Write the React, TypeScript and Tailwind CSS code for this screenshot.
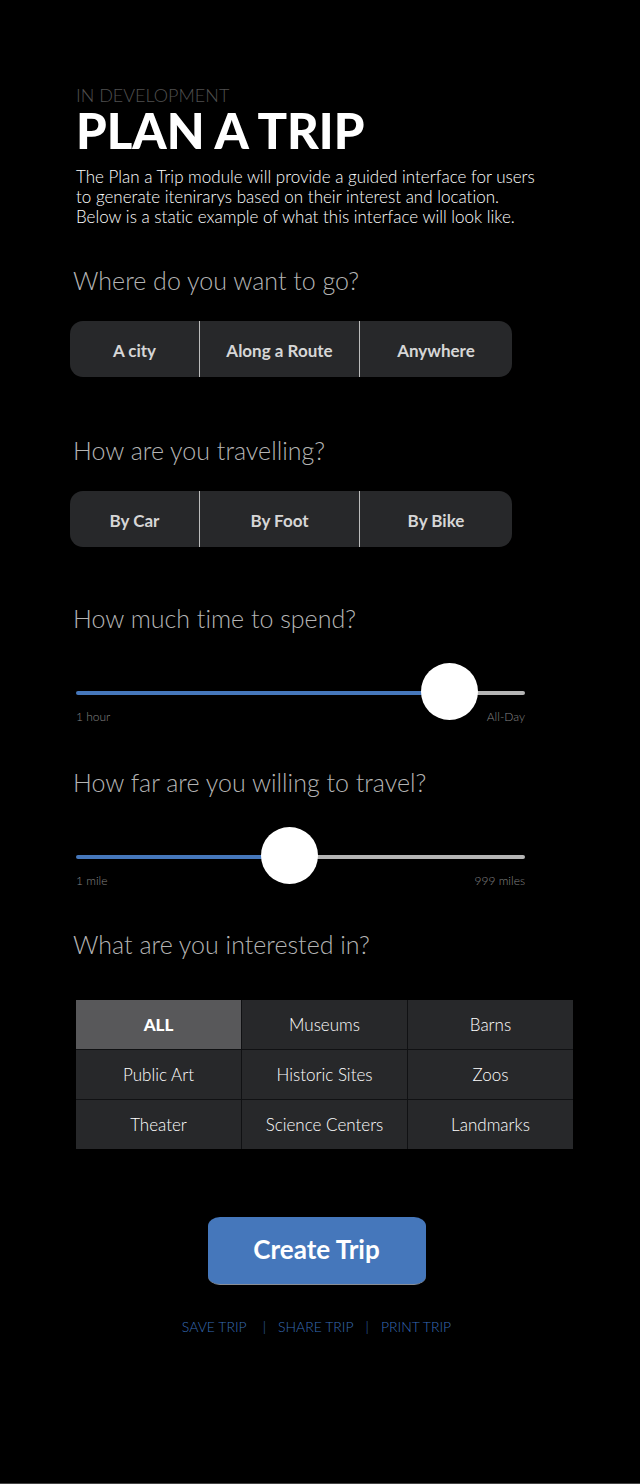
import { useId, useState, type CSSProperties } from "react";

function Heading({ children, id }: { children: string; id?: string }) {
  return (
    <h2 id={id} className="pl-[3px] text-[25px] leading-8 font-light text-[#b4b4b4]">
      {children}
    </h2>
  );
}

function Segmented({ title, options }: { title: string; options: string[] }) {
  const id = useId();
  return (
    <section>
      <Heading id={id}>{title}</Heading>
      <div
        role="group"
        aria-labelledby={id}
        className="mt-[25px] grid h-14 w-full max-w-[442px] grid-cols-[130fr_160fr_152fr] divide-x divide-[#bcbcbc] overflow-hidden rounded-[13px] bg-[#27282a]"
      >
        {options.map((option) => (
          <button key={option} type="button" className="pt-1 text-[17px] leading-5 font-bold text-[#d6d6d6]">
            {option}
          </button>
        ))}
      </div>
    </section>
  );
}

type RangeProps = {
  title: string;
  min: number;
  max: number;
  step: number;
  initial: number;
  minLabel: string;
  maxLabel: string;
};

function Range({ title, min, max, step, initial, minLabel, maxLabel }: RangeProps) {
  const id = useId();
  const [value, setValue] = useState(initial);
  const fill = { "--fill": `${((value - min) / (max - min)) * 100}%` } as CSSProperties;
  return (
    <section>
      <label htmlFor={id}>
        <Heading>{title}</Heading>
      </label>
      <div className="mt-[30px] max-w-[455px] pl-1.5">
        <input
          id={id}
          type="range"
          min={min}
          max={max}
          step={step}
          value={value}
          style={fill}
          onChange={(e) => setValue(Number(e.target.value))}
          className="block h-[57px] w-full cursor-pointer appearance-none bg-transparent [&::-webkit-slider-runnable-track]:h-1 [&::-webkit-slider-runnable-track]:rounded-full [&::-webkit-slider-runnable-track]:bg-[linear-gradient(to_right,#4577bb_var(--fill),#b5b5b5_var(--fill))] [&::-webkit-slider-thumb]:-mt-7 [&::-webkit-slider-thumb]:size-[57px] [&::-webkit-slider-thumb]:appearance-none [&::-webkit-slider-thumb]:rounded-full [&::-webkit-slider-thumb]:bg-white"
        />
        <div className="-mt-3 flex justify-between text-xs leading-4 font-light text-[#858585]">
          <span>{minLabel}</span>
          <span>{maxLabel}</span>
        </div>
      </div>
    </section>
  );
}

const interests = [
  "ALL",
  "Museums",
  "Barns",
  "Public Art",
  "Historic Sites",
  "Zoos",
  "Theater",
  "Science Centers",
  "Landmarks",
];

export default function App() {
  const [selected, setSelected] = useState("ALL");
  return (
    <main className="min-h-screen border-b border-[#444444] bg-black pt-[84px] pr-[67px] pb-16 pl-[70px] font-['Lato',sans-serif] text-white [font-variant-ligatures:none]">
      <header className="pl-1.5">
        <p className="text-lg leading-[22px] font-light text-[#505050]">IN DEVELOPMENT</p>
        <h1 className="text-[49px] leading-12 font-black">PLAN A TRIP</h1>
        <p className="mt-[13px] text-[17px] leading-5 font-light">
          The Plan a Trip module will provide a guided interface for users
          <br />
          to generate itenirarys based on their interest and location.
          <br />
          Below is a static example of what this interface will look like.
        </p>
      </header>

      <div className="mt-[37px] flex flex-col gap-[57px]">
        <Segmented title="Where do you want to go?" options={["A city", "Along a Route", "Anywhere"]} />
        <Segmented title="How are you travelling?" options={["By Car", "By Foot", "By Bike"]} />
      </div>

      <div className="mt-[55px] flex flex-col gap-[41px]">
        <Range
          title="How much time to spend?"
          min={60}
          max={1440}
          step={15}
          initial={1275}
          minLabel="1 hour"
          maxLabel="All-Day"
        />
        <Range
          title="How far are you willing to travel?"
          min={1}
          max={999}
          step={1}
          initial={471}
          minLabel="1 mile"
          maxLabel="999 miles"
        />
      </div>

      <section className="mt-[39px]">
        <Heading id="interests">What are you interested in?</Heading>
        <div className="mt-10 pl-1.5">
          <div role="group" aria-labelledby="interests" className="grid grid-cols-3 gap-px bg-[#101113]">
            {interests.map((name) => (
              <button
                key={name}
                type="button"
                aria-pressed={selected === name}
                onClick={() => setSelected(name)}
                className="h-[49px] bg-[#27282a] text-[17px] leading-5 font-light text-white aria-pressed:bg-[#58585a] aria-pressed:font-black"
              >
                {name}
              </button>
            ))}
          </div>
        </div>
      </section>

      <footer className="mt-[68px] flex flex-col items-center pr-2.5">
        <button
          type="button"
          className="h-[68px] w-full max-w-[218px] rounded-[12px/9px] border-b border-[#8a8f96] bg-[#4577bb] pb-0.5 text-[26px] font-bold"
        >
          Create Trip
        </button>
        <nav className="mt-8 flex items-center text-sm leading-5 font-light text-[#376bb4]">
          <a href="#save">SAVE TRIP</a>
          <span className="pr-3 pl-4">|</span>
          <a href="#share">SHARE TRIP</a>
          <span className="px-3">|</span>
          <a href="#print">PRINT TRIP</a>
        </nav>
      </footer>
    </main>
  );
}
